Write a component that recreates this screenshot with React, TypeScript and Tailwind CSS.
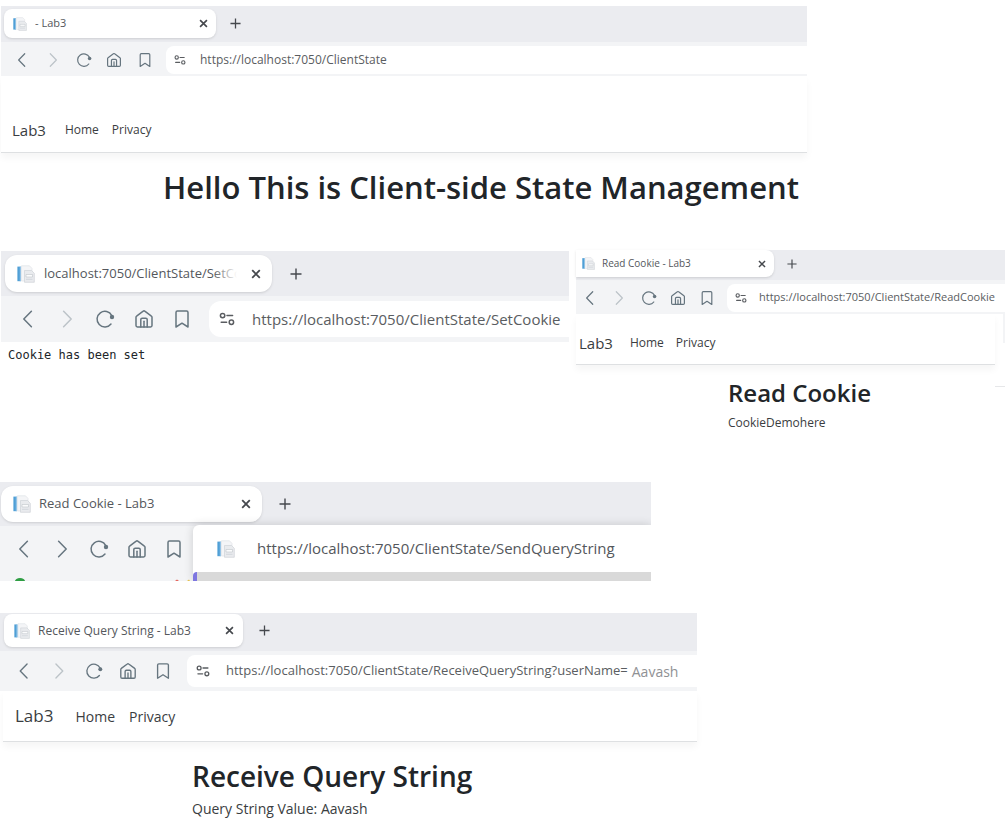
import type { ReactNode } from "react";

type IconProps = { className: string };

const stroke = {
  fill: "none",
  stroke: "currentColor",
  strokeWidth: 1.5,
  strokeLinecap: "round" as const,
  strokeLinejoin: "round" as const,
};

function BackIcon({ className }: IconProps) {
  return (
    <svg viewBox="0 0 20 20" className={className} {...stroke} aria-hidden="true">
      <path d="M13.4 2.2 5.8 10l7.6 7.8" />
    </svg>
  );
}

function ForwardIcon({ className }: IconProps) {
  return (
    <svg viewBox="0 0 20 20" className={className} {...stroke} aria-hidden="true">
      <path d="M6.6 2.2 14.2 10l-7.6 7.8" />
    </svg>
  );
}

function ReloadIcon({ className }: IconProps) {
  return (
    <svg viewBox="0 0 20 20" className={className} {...stroke} aria-hidden="true">
      <path d="M16 15A7.800 7.800 0 1 1 16.800 6.600" />
      <circle cx="17" cy="8" r="2.2" fill="currentColor" stroke="none" />
    </svg>
  );
}

function HomeIcon({ className }: IconProps) {
  return (
    <svg viewBox="0 0 20 20" className={className} {...stroke} aria-hidden="true">
      <path d="M3.4 18A1.4 1.4 0 0 1 2 16.6V8.2c0-.5.2-.9.6-1.1L9.2 2.2c.5-.4 1.1-.4 1.6 0l6.6 4.9c.4.2.6.6.6 1.1v8.4a1.4 1.4 0 0 1-1.4 1.4z" />
      <path d="M6.8 18v-7.4c0-.8.6-1.4 1.4-1.4h3.600c.8 0 1.400.6 1.400 1.400V18" />
      <path d="M10 12.2V18" />
    </svg>
  );
}

function BookmarkIcon({ className }: IconProps) {
  return (
    <svg viewBox="0 0 20 20" className={className} {...stroke} aria-hidden="true">
      <path d="M4 18V3.4C4 2.6 4.6 2 5.4 2h9.2c.8 0 1.4.6 1.4 1.4V18l-6-3.8z" />
    </svg>
  );
}

function TuneIcon({ className }: IconProps) {
  return (
    <svg viewBox="0 0 16 16" className={className} {...stroke} aria-hidden="true">
      <circle cx="3.6" cy="4.6" r="2.2" />
      <path d="M8 4.600h5.600M2.200 11.200h5.400" />
      <circle cx="12.4" cy="11.2" r="2.2" />
    </svg>
  );
}

function CloseIcon({ className }: IconProps) {
  return (
    <svg viewBox="0 0 10 10" className={className} aria-hidden="true">
      <path d="M1.2 1.2l7.6 7.6M8.8 1.2L1.2 8.8" stroke="currentColor" strokeWidth="1.8" />
    </svg>
  );
}

function PlusIcon({ className }: IconProps) {
  return (
    <svg viewBox="0 0 12 12" className={className} aria-hidden="true">
      <path d="M6 .5v11M.5 6h11" stroke="currentColor" strokeWidth="1.400" />
    </svg>
  );
}

function Favicon({ className }: IconProps) {
  return (
    <svg viewBox="0 0 18 18" className={className} aria-hidden="true">
      <path d="M4.500 .8h8l2.500 2.600V16h-10.500z" fill="#f4f5f7" stroke="#dfe2e6" strokeWidth=".7" />
      <rect x=".4" y="1.6" width="3.4" height="14.6" fill="#4f9fd6" />
      <rect x="2.8" y="1.6" width="1" height="14.6" fill="#9cc8e8" />
      <path d="M7.500 5.500h7l2.800 2.800V17.300H7.500z" fill="#e9ebee" stroke="#cfd3d8" strokeWidth=".7" />
      <path d="M9 9.500h6.500v2.500H9z" fill="#fbfcfd" stroke="#bfc4ca" strokeWidth=".6" />
      <path d="M9 14.300h6.500" stroke="#c9ced5" strokeWidth=".7" />
    </svg>
  );
}

type Sizes = {
  strip: string;
  tab: string;
  favicon: string;
  title: string;
  close: string;
  plus: string;
  bar: string;
  nav: string;
  icon: string;
  address: string;
  tune: string;
  url: string;
};

type ChromeProps = {
  id: string;
  title: string;
  url: string;
  urlTail?: string;
  sizes: Sizes;
  fadeTitle?: boolean;
};

function TabStrip({ title, sizes, fadeTitle }: { title: string; sizes: Sizes; fadeTitle?: boolean }) {
  return (
    <div className={`flex bg-[#ebecf0] text-[#45484d] ${sizes.strip}`}>
      <div className={`flex shrink-0 items-center bg-white shadow-sm ${sizes.tab}`}>
        <Favicon className={`shrink-0 ${sizes.favicon}`} />
        <span className={`relative min-w-0 flex-1 overflow-hidden whitespace-nowrap text-[#54575c] ${sizes.title}`}>
          {title}
          {fadeTitle && <span className="absolute inset-y-0 right-0 w-6 bg-linear-to-r from-transparent to-white" />}
        </span>
        <button type="button" aria-label="Close tab" className="shrink-0">
          <CloseIcon className={sizes.close} />
        </button>
      </div>
      <button type="button" aria-label="New tab" className="shrink-0">
        <PlusIcon className={sizes.plus} />
      </button>
    </div>
  );
}

function NavButtons({ sizes, canForward }: { sizes: Sizes; canForward?: boolean }) {
  return (
    <div className={`flex shrink-0 items-center justify-between text-[#66757f] ${sizes.nav}`}>
      <button type="button" aria-label="Back"><BackIcon className={sizes.icon} /></button>
      <button type="button" aria-label="Forward" className={canForward ? "" : "text-[#bcc3c8]"}>
        <ForwardIcon className={sizes.icon} />
      </button>
      <button type="button" aria-label="Reload"><ReloadIcon className={sizes.icon} /></button>
      <button type="button" aria-label="Home"><HomeIcon className={sizes.icon} /></button>
      <button type="button" aria-label="Bookmark"><BookmarkIcon className={sizes.icon} /></button>
    </div>
  );
}

function BrowserChrome({ id, title, url, urlTail, sizes, fadeTitle }: ChromeProps) {
  return (
    <div>
      <TabStrip title={title} sizes={sizes} fadeTitle={fadeTitle} />
      <div className={`flex items-center bg-[#f3f4f6] ${sizes.bar}`}>
        <NavButtons sizes={sizes} />
        <div className={`flex min-w-0 flex-1 items-center overflow-hidden bg-white text-[#5a5d61] ${sizes.address}`}>
          <TuneIcon className={`shrink-0 ${sizes.tune}`} />
          <input
            id={id}
            aria-label="Address"
            defaultValue={url}
            className={`field-sizing-content bg-transparent p-0 outline-none ${sizes.url}`}
          />
          {urlTail && <span className="ml-[4px] text-[14px] text-[#8f9194]">{urlTail}</span>}
        </div>
      </div>
    </div>
  );
}

function SiteHeader({ className, brand, links }: { className: string; brand: string; links: string }) {
  return (
    <header className={`flex items-center border-b border-[#dee0e2] text-[#3a3d41] shadow-[0_5px_7px_rgba(0,0,0,0.04)] ${className}`}>
      <a href="#" className={brand}>Lab3</a>
      <nav className={`flex ${links}`}>
        <a href="#">Home</a>
        <a href="#">Privacy</a>
      </nav>
    </header>
  );
}

function Panel({ className, children }: { className: string; children: ReactNode }) {
  return <section className={`w-full ${className}`}>{children}</section>;
}

const clientState: Sizes = {
  strip: "h-[36px] pt-[3px] pl-[3px]",
  tab: "h-[29px] w-[212px] rounded-lg pl-[9px] pr-[8px]",
  favicon: "size-[14px]",
  title: "ml-2 text-[11px]",
  close: "size-[9px]",
  plus: "mb-[4px] ml-[14px] size-[11px]",
  bar: "h-[34px] pt-[2px] pl-[13px]",
  nav: "w-[139px]",
  icon: "size-[16px]",
  address: "ml-[13px] h-[28px] rounded-l-lg pl-[8px]",
  tune: "size-[12px]",
  url: "ml-[14px] text-[12px]",
};

const setCookie: Sizes = {
  strip: "h-[45px] pt-[4px] pl-[4px]",
  tab: "h-[37px] w-[267px] rounded-xl pl-[12px] pr-[11px]",
  favicon: "size-[18px]",
  title: "ml-[9px] mr-[14px] text-[13px]",
  close: "size-[10px]",
  plus: "mb-[4px] ml-[18px] size-[12px]",
  bar: "h-[46px] pl-[17px]",
  nav: "w-[174px]",
  icon: "size-[20px]",
  address: "ml-[17px] h-[36px] rounded-l-xl pl-[10px]",
  tune: "size-[16px]",
  url: "ml-[17px] text-[15px]",
};

const readCookie: Sizes = {
  strip: "h-[30px]",
  tab: "h-[27px] w-[198px] rounded-r-lg pl-[6px] pr-[8px]",
  favicon: "size-[13px]",
  title: "ml-[7px] text-[10px]",
  close: "size-[8px]",
  plus: "mb-[3px] ml-[13px] size-[10px]",
  bar: "h-[34px] pt-px pl-[6px]",
  nav: "w-[133px]",
  icon: "size-[16px]",
  address: "ml-[12px] h-[28px] rounded-l-lg pl-[8px]",
  tune: "size-[12px]",
  url: "ml-[12px] text-[11px]",
};

const sendQuery: Sizes = {
  strip: "h-[44px] pt-[4px] pl-[1px]",
  tab: "h-[36px] w-[261px] rounded-xl pl-[12px] pr-[11px]",
  favicon: "size-[18px]",
  title: "ml-[8px] text-[13px]",
  close: "size-[10px]",
  plus: "mb-[4px] ml-[17px] size-[12px]",
  bar: "h-[46px] pl-[14px]",
  nav: "w-[170px]",
  icon: "size-[20px]",
  address: "",
  tune: "",
  url: "",
};

const receiveQuery: Sizes = {
  strip: "h-[38px] pt-[1px] pl-[4px]",
  tab: "h-[33px] w-[239px] rounded-lg pl-[10px] pr-[9px]",
  favicon: "size-[16px]",
  title: "ml-[8px] text-[12px]",
  close: "size-[9px]",
  plus: "mb-[4px] ml-[16px] size-[11px]",
  bar: "h-[40px] pl-[15px]",
  nav: "w-[157px]",
  icon: "size-[18px]",
  address: "ml-[15px] h-[32px] rounded-l-lg pl-[9px]",
  tune: "size-[14px]",
  url: "ml-[16px] text-[13px]",
};

export default function App() {
  return (
    <div className="flex min-h-screen flex-col overflow-x-hidden bg-white pt-[6px] font-['Open_Sans','Noto_Sans',sans-serif] text-[#212529]">
      <Panel className="max-w-[807px] pl-px">
        <BrowserChrome id="url-client-state" title="- Lab3" url="https://localhost:7050/ClientState" sizes={clientState} />
        <SiteHeader className="h-[77px] pt-[32px] pl-[11px]" brand="text-[15px]" links="ml-[19px] gap-[13px] text-[12px]" />
        <h1 className="pt-[17px] pr-[8px] text-right text-[31px] leading-[35px] font-semibold whitespace-nowrap">
          Hello This is Client-side State Management
        </h1>
      </Panel>

      <div className="mt-[45px] flex w-full">
        <Panel className="max-w-[569px] pt-px pl-px">
          <BrowserChrome
            id="url-set-cookie"
            title="localhost:7050/ClientState/SetCookie"
            url="https://localhost:7050/ClientState/SetCookie"
            sizes={setCookie}
            fadeTitle
          />
          <p className="pt-[5px] pl-[7px] font-['DejaVu_Sans_Mono',monospace] text-[12px] leading-[16px]">Cookie has been set</p>
        </Panel>
        <Panel className="ml-[7px] min-w-0 flex-1 pr-[2px]">
          <BrowserChrome
            id="url-read-cookie"
            title="Read Cookie - Lab3"
            url="https://localhost:7050/ClientState/ReadCookie"
            sizes={readCookie}
          />
          <div className="flex">
            <div className="min-w-0 flex-1">
              <SiteHeader className="h-[51px] pt-[8px] pl-[3px]" brand="text-[15px]" links="ml-[17px] gap-[12px] text-[12px]" />
            </div>
            <div className="h-[73px] w-[10px] border-b border-[#e6e7e9]">
              <div className="ml-auto h-[29px] w-[2px] bg-[#f3f4f6]" />
            </div>
          </div>
          <div className="-mt-[22px] pt-[12px] pl-[152px]">
            <h1 className="text-[24px] leading-[32px] font-semibold whitespace-nowrap">Read Cookie</h1>
            <p className="pt-[6px] text-[12px] leading-[16px] text-[#3a3d41]">CookieDemohere</p>
          </div>
        </Panel>
      </div>

      <Panel className="relative mt-[51px] h-[99px] max-w-[651px] overflow-hidden">
        <TabStrip title="Read Cookie - Lab3" sizes={sendQuery} />
        <div className="h-[55px] bg-[#f3f4f6]">
          <div className={`flex items-center ${sendQuery.bar}`}>
            <NavButtons sizes={sendQuery} canForward />
          </div>
          <svg viewBox="0 0 190 9" className="h-[9px] w-[190px]" aria-hidden="true">
            <path d="M15 9a5 3 0 0 1 10 0z" fill="#2f9e44" />
            <path d="M175 9l2-1.500 2 1.500z" fill="#e5645c" />
            <path d="M187 9l2-1.500 1 1.500z" fill="#e8c34a" />
          </svg>
        </div>
        <div className="absolute top-[43px] right-0 bottom-0 left-[193px] flex flex-col rounded-tl-md bg-white shadow-[0_0_10px_rgba(0,0,0,0.16)]">
          <a href="#" className="flex h-[47px] items-center pl-[24px] text-[15px] text-[#54575c]">
            <Favicon className="size-[18px]" />
            <span className="ml-[22px] whitespace-nowrap">https://localhost:7050/ClientState/SendQueryString</span>
          </a>
          <div className="flex-1 rounded-tl-sm border-l-4 border-[#7d76e0] bg-[#d9d9d9]" />
        </div>
      </Panel>

      <Panel className="mt-[32px] max-w-[697px]">
        <BrowserChrome
          id="url-receive-query"
          title="Receive Query String - Lab3"
          url="https://localhost:7050/ClientState/ReceiveQueryString?userName="
          urlTail="Aavash"
          sizes={receiveQuery}
        />
        <div className="pl-[3px]">
          <SiteHeader className="h-[51px] pl-[12px]" brand="text-[17px]" links="ml-[22px] gap-[14px] text-[14px]" />
        </div>
        <div className="pt-[16px] pl-[192px]">
          <h1 className="text-[28px] leading-[36px] font-semibold whitespace-nowrap">Receive Query String</h1>
          <p className="pt-[5px] text-[14px] leading-[20px] text-[#3a3d41]">Query String Value: Aavash</p>
        </div>
      </Panel>
    </div>
  );
}
